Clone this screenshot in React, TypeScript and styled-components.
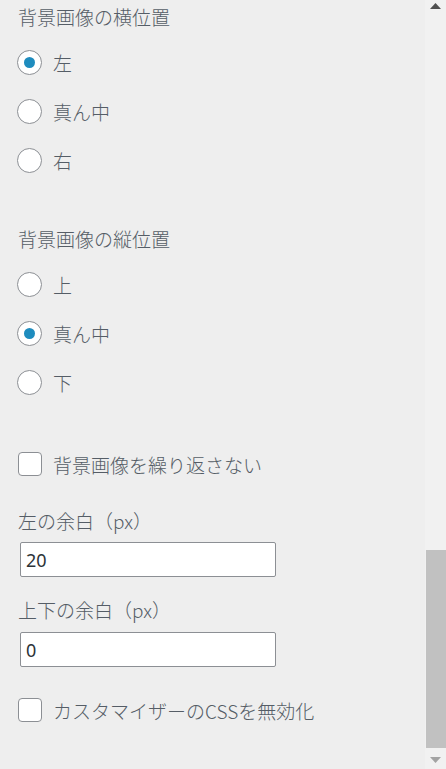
import React from "react";
import styled, { createGlobalStyle } from "styled-components";

const Global = createGlobalStyle`
  html, body { margin: 0; padding: 0; height: 100%; }
  body {
    background: #eeeeee;
    font-family: "Noto Sans CJK JP", "Noto Sans", sans-serif;
    font-weight: 300;
    color: #555d66;
    overflow: hidden;
  }
  #root { height: 100%; }
`;

const Page = styled.div`
  display: flex;
  height: 769px;
  width: 446px;
`;

const Content = styled.div`
  flex: 1;
  display: flex;
  flex-direction: column;
  padding: 5px 0 0 18px;
`;

const Heading = styled.div<{ $mb?: number }>`
  font-size: 19px;
  line-height: 24px;
  height: 24px;
  margin-bottom: ${(p) => p.$mb ?? 21}px;
  white-space: nowrap;
`;

const OptionGroup = styled.div<{ $mb: number }>`
  display: flex;
  flex-direction: column;
  gap: 25px;
  margin-bottom: ${(p) => p.$mb}px;
`;

const Option = styled.label`
  display: flex;
  align-items: center;
  height: 24px;
  gap: 11px;
  font-size: 19px;
  white-space: nowrap;
`;

const Radio = styled.span<{ $checked?: boolean }>`
  box-sizing: border-box;
  width: 25px;
  height: 25px;
  margin-left: -1px;
  border: 1px solid #8c8f94;
  border-radius: 50%;
  background: #fff;
  display: flex;
  align-items: center;
  justify-content: center;
  flex-shrink: 0;
  &::before {
    content: "";
    display: ${(p) => (p.$checked ? "block" : "none")};
    width: 11px;
    height: 11px;
    border-radius: 50%;
    background: #1e8cbe;
  }
`;

const Checkbox = styled.span`
  box-sizing: border-box;
  width: 24px;
  height: 24px;
  border: 1px solid #8c8f94;
  border-radius: 4px;
  background: #fff;
  flex-shrink: 0;
`;

const CheckRow = styled(Option)<{ $mb?: number }>`
  margin-bottom: ${(p) => p.$mb ?? 0}px;
`;

const FieldLabel = styled(Heading)``;

const TextInput = styled.div<{ $mb: number }>`
  box-sizing: border-box;
  width: 256px;
  height: 35px;
  margin-left: 2px;
  margin-bottom: ${(p) => p.$mb}px;
  border: 1px solid #8c8f94;
  border-radius: 2px;
  background: #fff;
  display: flex;
  align-items: center;
  padding: 0 5px;
  font-family: "Noto Sans", "Open Sans", sans-serif;
  font-weight: 400;
  font-size: 18px;
  color: #2c3338;
`;

const Scrollbar = styled.div`
  width: 21px;
  flex-shrink: 0;
  background: #f1f1f1;
  display: flex;
  flex-direction: column;
`;

const ArrowButton = styled.div`
  display: flex;
  justify-content: center;
  align-items: flex-start;
  flex-shrink: 0;
`;

const Track = styled.div`
  flex: 1;
  display: flex;
  flex-direction: column;
  justify-content: flex-end;
  padding-bottom: 1px;
`;

const Thumb = styled.div`
  height: 198px;
  background: #c1c1c1;
  margin-left: 1px;
`;

const Arrow = ({ up, color }: { up?: boolean; color: string }) => (
  <svg width="11" height="6" viewBox="0 0 11 6" style={{ display: "block" }}>
    {up ? (
      <polygon points="5.5,0 11,6 0,6" fill={color} />
    ) : (
      <polygon points="0,0 11,0 5.5,6" fill={color} />
    )}
  </svg>
);

const UpButton = styled(ArrowButton)`
  padding-top: 3px;
  height: 17px;
`;

const DownButton = styled(ArrowButton)`
  padding-top: 8px;
  height: 12px;
`;

export default function App() {
  return (
    <>
      <Global />
      <Page>
        <Content>
          <Heading>背景画像の横位置</Heading>
          <OptionGroup $mb={55}>
            <Option>
              <Radio $checked />左
            </Option>
            <Option>
              <Radio />真ん中
            </Option>
            <Option>
              <Radio />右
            </Option>
          </OptionGroup>
          <Heading>背景画像の縦位置</Heading>
          <OptionGroup $mb={58}>
            <Option>
              <Radio />上
            </Option>
            <Option>
              <Radio $checked />真ん中
            </Option>
            <Option>
              <Radio />下
            </Option>
          </OptionGroup>
          <CheckRow $mb={33}>
            <Checkbox />背景画像を繰り返さない
          </CheckRow>
          <FieldLabel $mb={9}>左の余白（px）</FieldLabel>
          <TextInput $mb={21}>20</TextInput>
          <FieldLabel $mb={10}>上下の余白（px）</FieldLabel>
          <TextInput $mb={31}>0</TextInput>
          <CheckRow>
            <Checkbox />カスタマイザーのCSSを無効化
          </CheckRow>
        </Content>
        <Scrollbar>
          <UpButton>
            <Arrow up color="#505050" />
          </UpButton>
          <Track>
            <Thumb />
          </Track>
          <DownButton>
            <Arrow color="#a3a3a3" />
          </DownButton>
        </Scrollbar>
      </Page>
    </>
  );
}
